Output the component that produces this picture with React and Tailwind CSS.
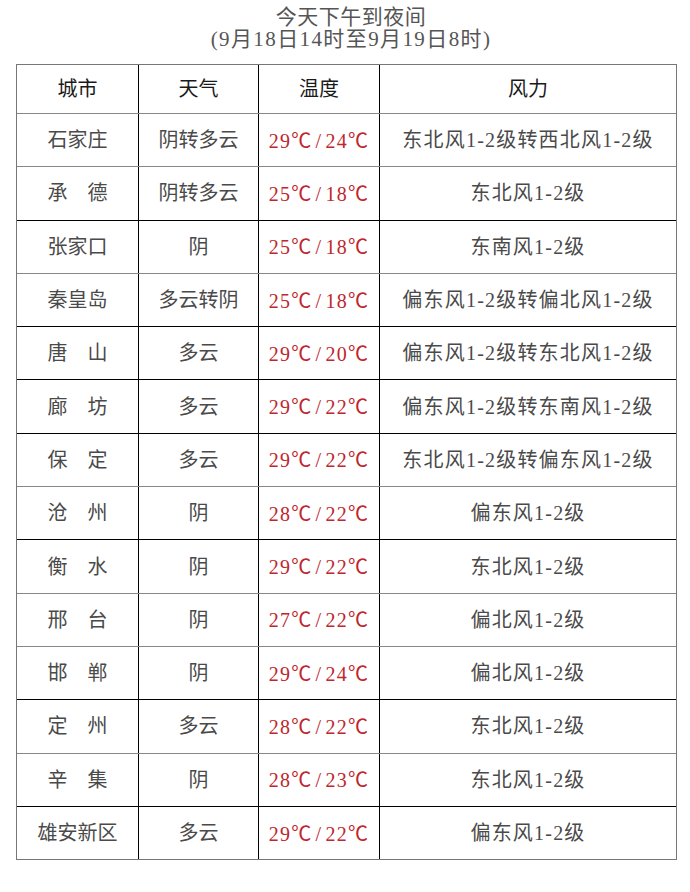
import React from "react";

const rows = [
  ["石家庄", "阴转多云", "29", "24", "东北风1-2级转西北风1-2级", "gray"],
  ["承　德", "阴转多云", "25", "18", "东北风1-2级", "black"],
  ["张家口", "阴", "25", "18", "东南风1-2级", "gray"],
  ["秦皇岛", "多云转阴", "25", "18", "偏东风1-2级转偏北风1-2级", "black"],
  ["唐　山", "多云", "29", "20", "偏东风1-2级转东北风1-2级", "black"],
  ["廊　坊", "多云", "29", "22", "偏东风1-2级转东南风1-2级", "black"],
  ["保　定", "多云", "29", "22", "东北风1-2级转偏东风1-2级", "gray"],
  ["沧　州", "阴", "28", "22", "偏东风1-2级", "black"],
  ["衡　水", "阴", "29", "22", "东北风1-2级", "gray"],
  ["邢　台", "阴", "27", "22", "偏北风1-2级", "gray"],
  ["邯　郸", "阴", "29", "24", "偏北风1-2级", "black"],
  ["定　州", "多云", "28", "22", "东北风1-2级", "gray"],
  ["辛　集", "阴", "28", "23", "东北风1-2级", "black"],
  ["雄安新区", "多云", "29", "22", "偏东风1-2级", "none"],
];

const font = {
  fontFamily: '"Liberation Serif", "Noto Sans CJK SC", serif',
};

function Deg() {
  return (
    <span className="font-['Noto_Sans_CJK_SC',sans-serif]">℃</span>
  );
}

export default function App() {
  return (
    <div
      className="w-[690px] h-[892px] bg-white overflow-hidden"
      style={font}
    >
      <div className="pt-[6px] pl-[12px] text-center text-[21px] leading-[22px] text-[#555]">
        <div className="tracking-[0.5px]">今天下午到夜间</div>
        <div className="tracking-[1.4px]">(9月18日14时至9月19日8时)</div>
      </div>
      <div className="mt-[14px] ml-[16px] w-[661px] border border-[#777] flex flex-col">
        <div className="grid grid-cols-[121px_120px_121px_1fr] h-[48px] text-[20px] text-[#1a1a1a]">
          <div className="flex items-center justify-center">城市</div>
          <div className="flex items-center justify-center border-l border-black">天气</div>
          <div className="flex items-center justify-center border-l border-black">温度</div>
          <div className="flex items-center justify-center border-l border-black">风力</div>
        </div>
        <div className="border-t border-[#888]" />
        {rows.map((r, i) => (
          <div key={i} className="flex flex-col">
            <div className="grid grid-cols-[121px_120px_121px_1fr] h-[52.3px] text-[20px] text-[#4a4a4a]">
              <div className="flex items-center justify-center">{r[0]}</div>
              <div className="flex items-center justify-center border-l border-black">{r[1]}</div>
              <div className="flex items-center justify-center border-l border-black text-[#c0262d]">
                <span className="whitespace-nowrap tracking-[1.3px]">
                  {r[2]}
                  <Deg />
                  <span className="px-[3px]">/</span>
                  {r[3]}
                  <Deg />
                </span>
              </div>
              <div className="flex items-center justify-center border-l border-black tracking-[1.2px]">{r[4]}</div>
            </div>
            {r[5] === "black" && <div className="border-t border-black" />}
            {r[5] === "gray" && <div className="border-t border-[#888]" />}
          </div>
        ))}
      </div>
    </div>
  );
}
